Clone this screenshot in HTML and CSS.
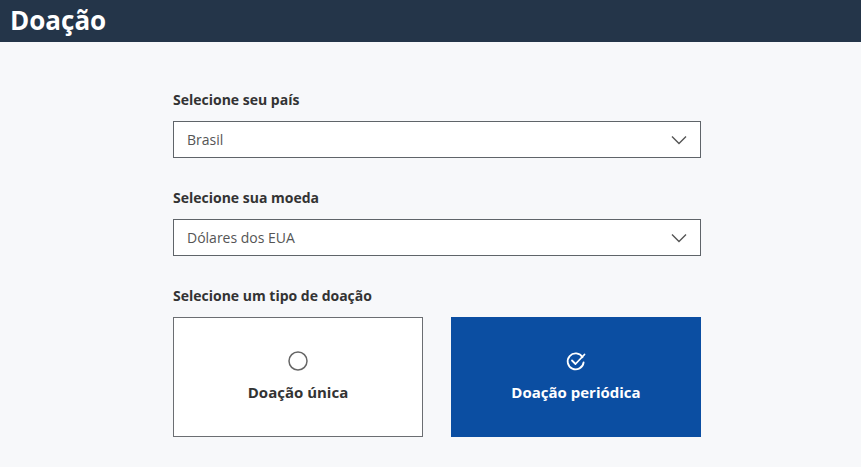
FILE: index.html
```html
<!DOCTYPE html>
<html lang="pt">
<head>
<meta charset="utf-8">
<link rel="stylesheet" href="styles.css">
</head>
<body>
<header class="topbar"><h1 class="title">Doação</h1></header>
<main class="form">
  <div class="field">
    <label class="label">Selecione seu país</label>
    <div class="select"><span>Brasil</span>
      <svg class="chev" width="16" height="10" viewBox="0 0 16 10"><path d="M1 1.5 L8 8.5 L15 1.5" fill="none" stroke="#555" stroke-width="1.4"/></svg>
    </div>
  </div>
  <div class="field">
    <label class="label">Selecione sua moeda</label>
    <div class="select"><span>Dólares dos EUA</span>
      <svg class="chev" width="16" height="10" viewBox="0 0 16 10"><path d="M1 1.5 L8 8.5 L15 1.5" fill="none" stroke="#555" stroke-width="1.4"/></svg>
    </div>
  </div>
  <div class="field">
    <label class="label">Selecione um tipo de doação</label>
    <div class="cards">
      <div class="card">
        <svg width="22" height="22" viewBox="0 0 22 22"><circle cx="11" cy="11" r="9" fill="none" stroke="#666" stroke-width="1.5"/></svg>
        <span class="card-text">Doação única</span>
      </div>
      <div class="card active">
        <svg width="22" height="22" viewBox="0 0 22 22"><path d="M17.5 7.2 A8 8 0 1 0 18.6 12.5" fill="none" stroke="#fff" stroke-width="1.8" stroke-linecap="round"/><path d="M7 10.5 L10.5 14 L19.5 4.5" fill="none" stroke="#fff" stroke-width="1.8" stroke-linecap="round" stroke-linejoin="round"/></svg>
        <span class="card-text">Doação periódica</span>
      </div>
    </div>
  </div>
</main>
</body>
</html>
```
FILE: styles.css
```css
* { box-sizing: border-box; }
html, body { margin: 0; padding: 0; }
body {
  background: #f7f8fa;
  font-family: "Open Sans", "Noto Sans", sans-serif;
  color: #333;
  height: 467px;
  overflow: hidden;
}
.topbar {
  background: #243549;
  height: 42px;
  padding: 0 10px;
  display: flex;
  align-items: center;
}
.title {
  margin: 0;
  color: #fff;
  font-size: 26px;
  font-weight: 700;
  line-height: 1;
  margin-top: -3px;
}
.form {
  width: 528px;
  margin: 0 0 0 173px;
  padding-top: 48px;
  display: flex;
  flex-direction: column;
  gap: 30px;
}
.field { display: flex; flex-direction: column; gap: 12px; }
.label {
  font-size: 14px;
  font-weight: 700;
  color: #333;
  line-height: 19px;
}
.select {
  height: 37px;
  background: #fff;
  border: 1px solid #5f6469;
  display: flex;
  align-items: center;
  justify-content: space-between;
  padding: 0 13px 0 13px;
  font-size: 14px;
  color: #555;
}
.chev { margin-top: 1px; }
.cards {
  display: grid;
  grid-template-columns: 250px 250px;
  gap: 28px;
}
.card {
  height: 120px;
  background: #fff;
  border: 1px solid #6b6e72;
  display: flex;
  flex-direction: column;
  align-items: center;
  justify-content: center;
  gap: 10px;
  padding-bottom: 2px;
}
.card.active {
  background: #0b4ea2;
  border-color: #0b4ea2;
  color: #fff;
}
.card-text {
  font-size: 15px;
  font-weight: 700;
  line-height: 20px;
}
```
